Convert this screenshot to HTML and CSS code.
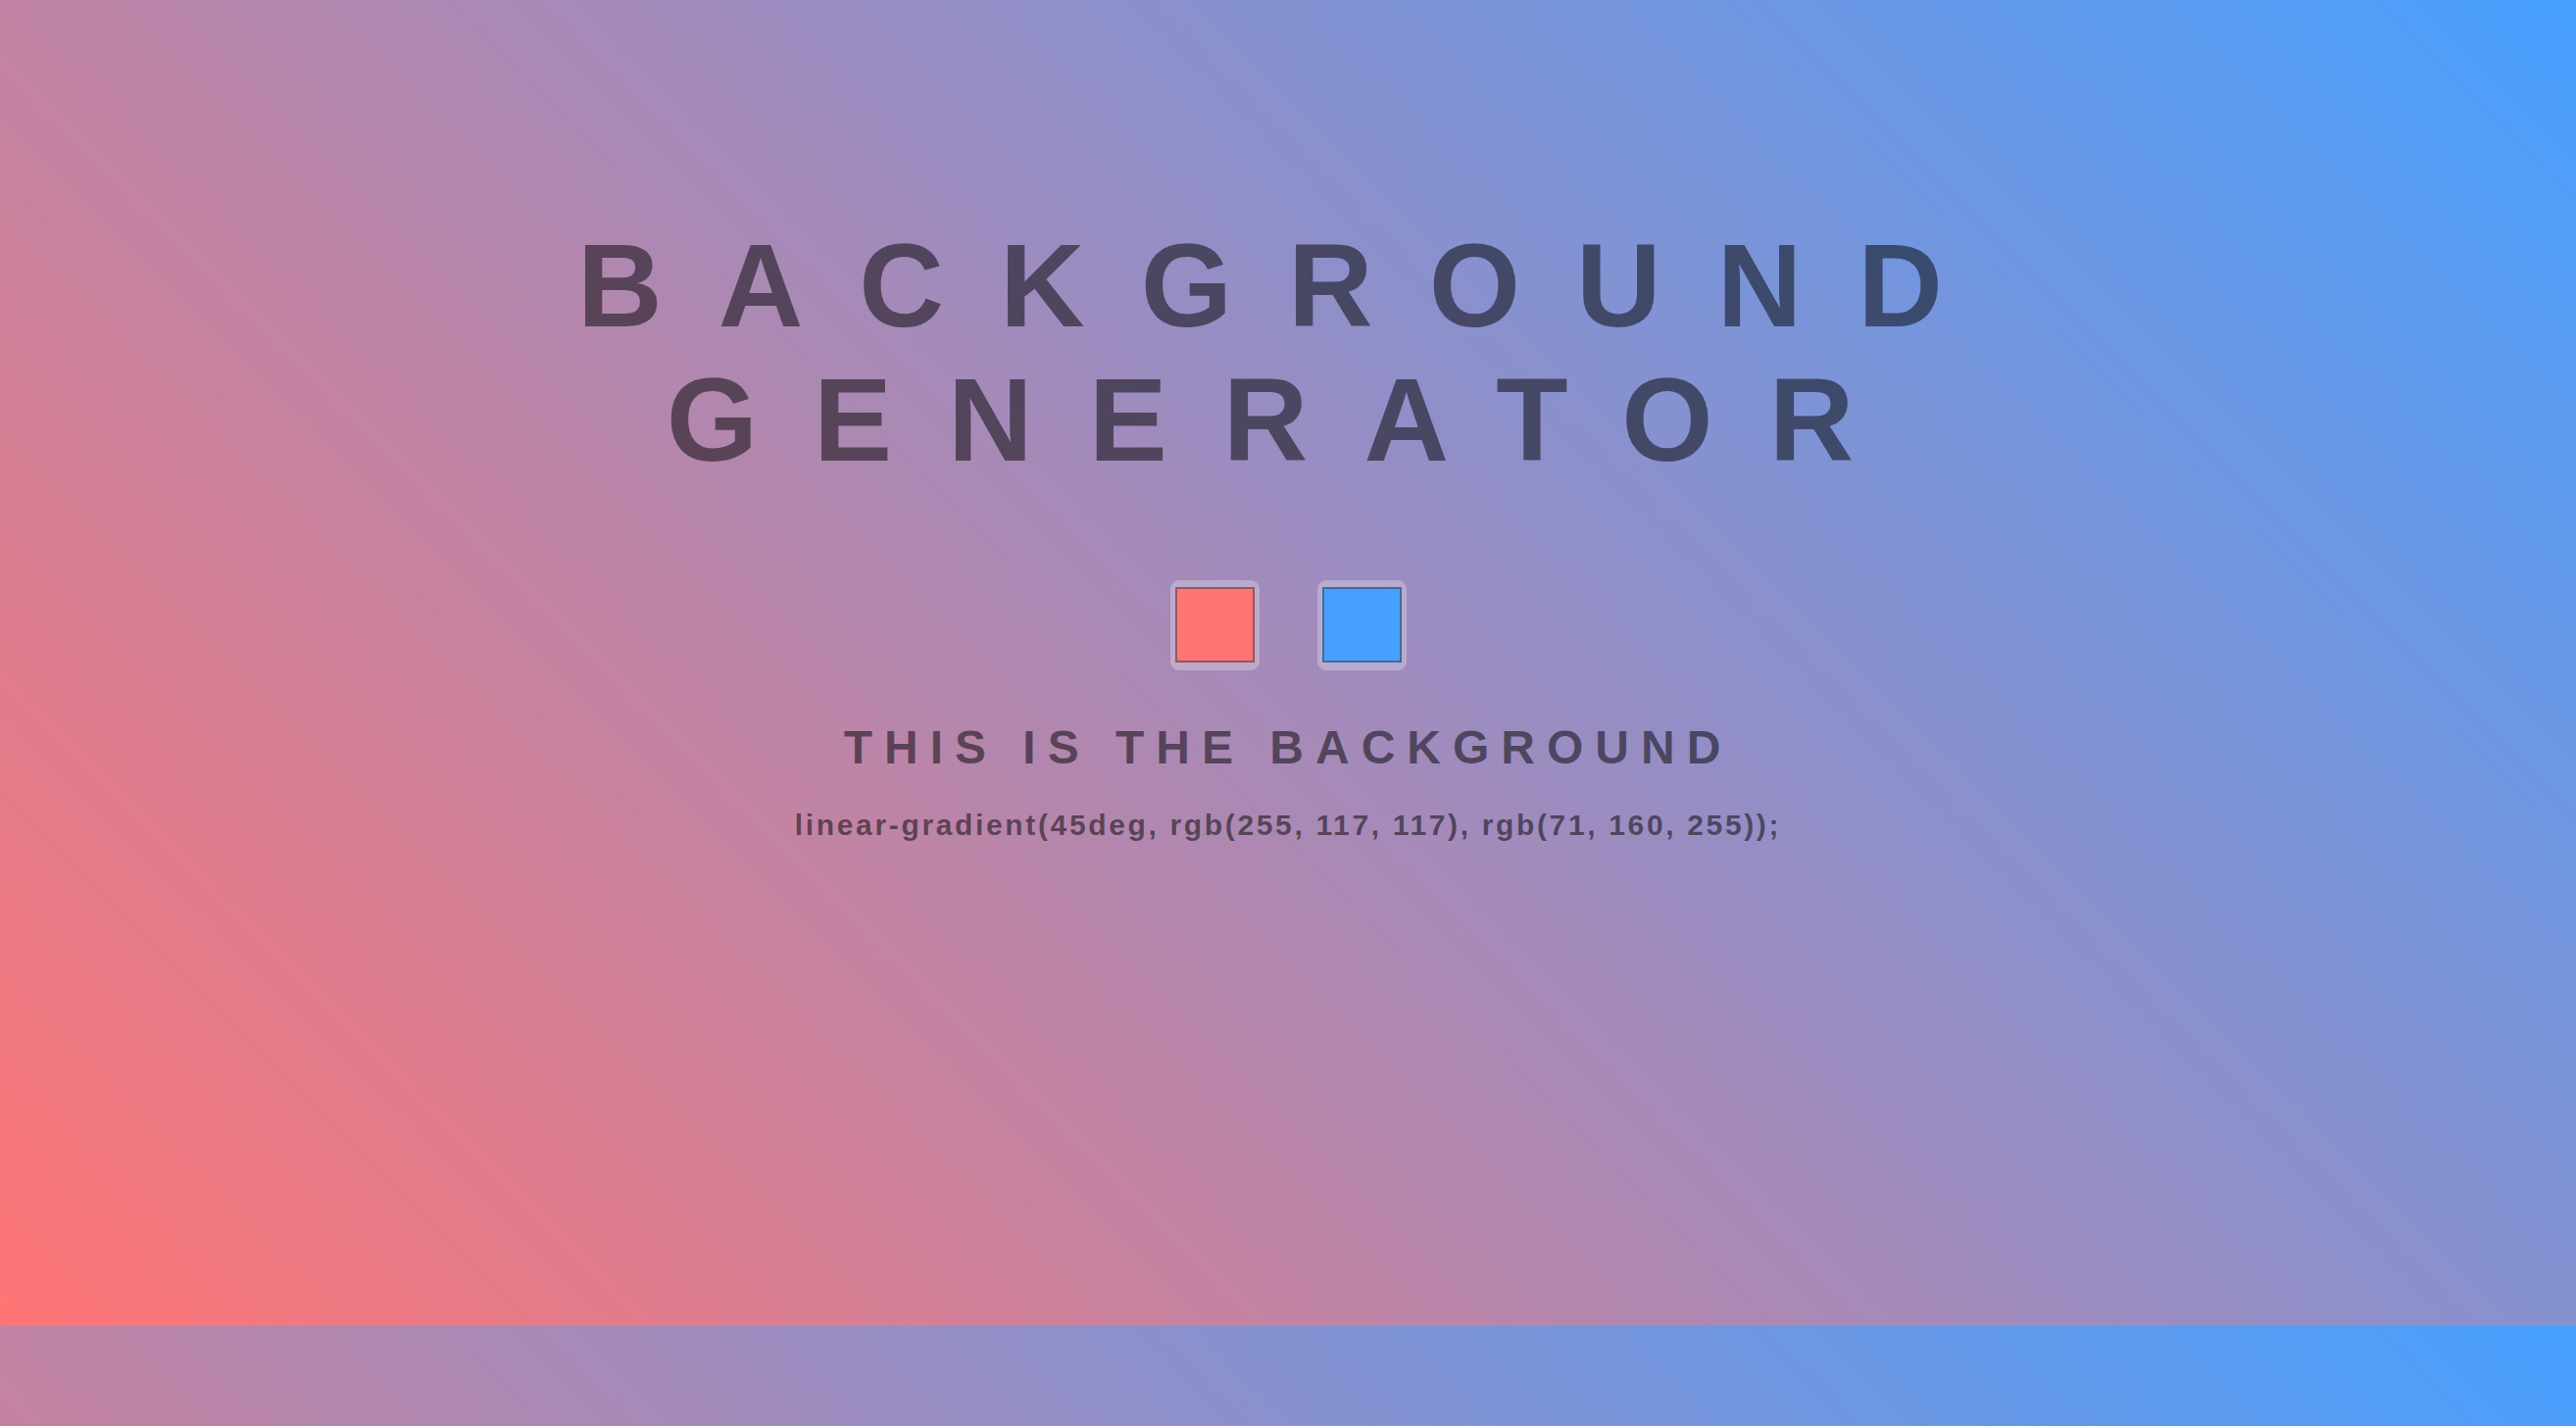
FILE: index.html
```html
<!DOCTYPE html>
<html lang="en">
<head>
<meta charset="utf-8">
<title>Background Generator</title>
<link rel="stylesheet" href="styles.css">
</head>
<body class="page">
  <h1 class="title">Background Generator</h1>
  <div class="pickers">
    <input class="picker" type="color" name="color1" value="#ff7575">
    <input class="picker" type="color" name="color2" value="#47a0ff">
  </div>
  <h3 class="subtitle">This is the background</h3>
  <p class="code">linear-gradient(45deg, rgb(255, 117, 117), rgb(71, 160, 255));</p>
</body>
</html>
```
FILE: styles.css
```css
html {
  margin: 0;
}

.page {
  margin: 0;
  box-sizing: border-box;
  min-height: 1353px;
  padding-top: 223px;
  display: flex;
  flex-direction: column;
  align-items: center;
  text-align: center;
  font-family: "Liberation Sans", Arial, Helvetica, sans-serif;
  font-weight: 700;
  color: rgba(0, 0, 0, 0.5);
  background: linear-gradient(45deg, rgb(255, 117, 117), rgb(71, 160, 255));
}

.title {
  margin: 0;
  width: 100%;
  font-size: 120px;
  font-weight: 700;
  line-height: 137px;
  letter-spacing: 57px;
  text-transform: uppercase;
}

.pickers {
  margin-top: 95px;
  display: flex;
  gap: 59px;
}

.picker {
  -webkit-appearance: none;
  appearance: none;
  width: 91px;
  height: 92px;
  padding: 0;
  margin: 0;
  border: none;
  border-radius: 9px;
  background: rgba(255, 255, 255, 0.27);
  cursor: pointer;
}

.picker::-webkit-color-swatch-wrapper {
  padding: 7px 5px 8px;
}

.picker::-webkit-color-swatch {
  border: 2px solid rgba(70, 70, 80, 0.6);
  border-radius: 0;
}

.subtitle {
  margin: 51px 0 0;
  font-size: 48px;
  font-weight: 700;
  line-height: 55px;
  letter-spacing: 12px;
  text-transform: uppercase;
}

.code {
  margin: 34px 0 0;
  font-size: 30px;
  font-weight: 700;
  line-height: 35px;
  letter-spacing: 2.65px;
}
```
